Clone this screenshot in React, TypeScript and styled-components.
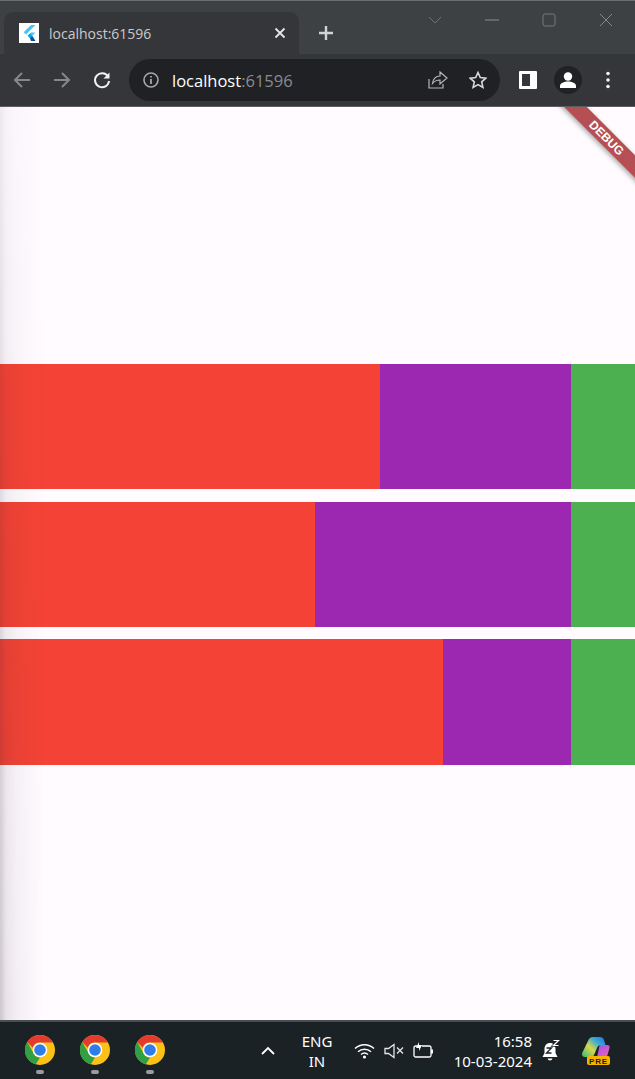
import React from "react";
import styled, { createGlobalStyle } from "styled-components";

const GlobalStyle = createGlobalStyle`
  html, body {
    margin: 0;
    padding: 0;
    height: 100%;
    background: #fffbff;
    font-family: "Noto Sans", "Open Sans", sans-serif;
    overflow: hidden;
  }
  #root {
    height: 100%;
  }
`;

const Window = styled.div`
  display: flex;
  flex-direction: column;
  width: 635px;
  height: 1079px;
`;

const TabStrip = styled.div`
  display: flex;
  align-items: flex-end;
  height: 54px;
  flex: none;
  padding-left: 4px;
  background: #3e4144;
  border-top: 1px solid #6b6d6f;
  box-sizing: border-box;
  position: relative;
`;

const Tab = styled.div`
  display: flex;
  align-items: center;
  width: 295px;
  height: 42px;
  padding: 0 13px 0 15px;
  box-sizing: border-box;
  background: #35363a;
  border-radius: 9px 9px 0 0;
`;

const Favicon = styled.div`
  display: flex;
  align-items: center;
  justify-content: center;
  width: 20px;
  height: 20px;
  background: #ffffff;
  flex: none;
`;

const TabTitle = styled.span`
  flex: 1;
  margin-left: 10px;
  font-family: "Open Sans", sans-serif;
  font-size: 14px;
  color: #c8cacc;
`;

const NewTab = styled.div`
  display: flex;
  align-items: center;
  margin-left: 19px;
  height: 42px;
`;

const WindowControls = styled.div`
  display: flex;
  align-items: center;
  gap: 43px;
  position: absolute;
  top: 12px;
  right: 22px;
`;

const Toolbar = styled.div`
  display: flex;
  align-items: center;
  height: 53px;
  flex: none;
  padding-left: 12px;
  box-sizing: border-box;
  background: #35363a;
  border-bottom: 1px solid #5c5e61;
`;

const NavGroup = styled.div`
  display: flex;
  align-items: center;
  gap: 20px;
  width: 117px;
  flex: none;
`;

const Omnibox = styled.div`
  display: flex;
  align-items: center;
  width: 371px;
  height: 42px;
  padding: 0 13px 0 14px;
  box-sizing: border-box;
  background: #202124;
  border-radius: 21px;
  flex: none;
`;

const Address = styled.span`
  flex: 1;
  margin-left: 13px;
  font-family: "Open Sans", sans-serif;
  font-size: 16.5px;
  color: #ffffff;
  span {
    color: #8a8c8f;
  }
`;

const OmniIcons = styled.div`
  display: flex;
  align-items: center;
  gap: 21px;
`;

const ToolbarEnd = styled.div`
  display: flex;
  align-items: center;
  margin-left: 19px;
`;

const Avatar = styled.div`
  display: flex;
  align-items: center;
  justify-content: center;
  width: 28px;
  height: 28px;
  margin: 0 24px 0 17px;
  border-radius: 50%;
  background: #202124;
`;

const Page = styled.main`
  flex: 1;
  display: flex;
  flex-direction: column;
  justify-content: center;
  gap: 12.5px;
  padding-top: 1.6px;
  background: #fffbff;
  position: relative;
  overflow: hidden;
`;

const BarRow = styled.div`
  display: flex;
  height: 125.2px;
  flex: none;
`;

const Segment = styled.div<{ $color: string; $size: number }>`
  width: ${(p) => p.$size}px;
  flex: none;
  background: ${(p) => p.$color};
`;

/* soft shadow of the neighbouring window, stronger toward the bottom */
const EdgeShade = styled.div`
  position: absolute;
  left: 0;
  top: 0;
  bottom: 0;
  width: 44px;
  background: linear-gradient(
    90deg,
    rgba(40, 30, 40, 0.24) 0,
    rgba(40, 30, 40, 0.11) 6px,
    rgba(40, 30, 40, 0.06) 16px,
    rgba(40, 30, 40, 0) 100%
  );
  mask-image: linear-gradient(180deg, rgba(0, 0, 0, 0.35), rgba(0, 0, 0, 1));
  pointer-events: none;
`;

const DebugBanner = styled.div`
  position: absolute;
  top: 23px;
  right: -28.5px;
  width: 115px;
  height: 16px;
  display: flex;
  align-items: center;
  justify-content: center;
  transform: rotate(45deg);
  background: rgba(176, 64, 68, 0.92);
  box-shadow: 0 2px 5px rgba(0, 0, 0, 0.35);
  color: #ffffff;
  font-family: "Liberation Sans", sans-serif;
  font-size: 12px;
  font-weight: 700;
`;

const Taskbar = styled.footer`
  display: flex;
  align-items: center;
  height: 59px;
  flex: none;
  padding-left: 25px;
  box-sizing: border-box;
  background: #1b2225;
  border-top: 2px solid #4a4d50;
  color: #ffffff;
`;

const Apps = styled.div`
  display: flex;
  gap: 25px;
  width: 236px;
  flex: none;
`;

const AppSlot = styled.div`
  display: flex;
  flex-direction: column;
  align-items: center;
  gap: 5px;
  margin-top: 7px;
`;

const RunningDot = styled.div`
  width: 8px;
  height: 4px;
  border-radius: 2px;
  background: #9a9c9e;
`;

const Lang = styled.div`
  width: 34px;
  margin-left: 25px;
  font-size: 15px;
  line-height: 20px;
  text-align: center;
  flex: none;
`;

const Tray = styled.div`
  display: flex;
  align-items: center;
  gap: 9px;
  margin-left: 20px;
  flex: none;
`;

const Clock = styled.div`
  width: 80px;
  margin-left: 18px;
  font-size: 15px;
  line-height: 20px;
  text-align: right;
  white-space: nowrap;
  flex: none;
`;

const TrayEnd = styled.div`
  display: flex;
  align-items: center;
  gap: 21px;
  margin-left: 10px;
  flex: none;
`;

const rows = [
  [380, 191, 64],
  [315, 256, 64],
  [443, 128, 64],
];
const colors = ["#f44336", "#9c27b0", "#4caf50"];

const FlutterLogo = () => (
  <svg width="16" height="18" viewBox="0 0 16 18">
    <path d="M10 1h4.500L5 10.500 2.700 8.200z" fill="#47c5fb" />
    <path d="M10 8.500h4.500L9 14l-2.300-2.300z" fill="#47c5fb" />
    <path d="M6.700 11.700 9 9.400l2.200 2.300L9 14z" fill="#00a8e8" />
    <path d="M9 14l2.200-2.300 3.300 5.300H10z" fill="#00569e" />
  </svg>
);

const ChromeLogo = () => (
  <svg width="30" height="30" viewBox="0 0 30 30">
    <circle cx="15" cy="15" r="15" fill="#fbc116" />
    <path d="M15 0a15 15 0 0 1 13 7.500H15a7.500 7.500 0 0 0-7.200 5.300L2.200 7A15 15 0 0 1 15 0z" fill="#e33b2e" />
    <path d="M2.200 7l6.500 11.500a7.500 7.500 0 0 0 6.300 4l-4.300 7A15 15 0 0 1 2.200 7z" fill="#319f43" />
    <circle cx="15" cy="15" r="7.300" fill="#ffffff" />
    <circle cx="15" cy="15" r="5.800" fill="#2f7de8" />
  </svg>
);

const Icon = ({ w, h, children }: { w: number; h: number; children: React.ReactNode }) => (
  <svg width={w} height={h} viewBox={`0 0 ${w} ${h}`} fill="none" style={{ flex: "none", display: "block" }}>
    {children}
  </svg>
);

export default function App() {
  return (
    <Window>
      <GlobalStyle />
      <TabStrip>
        <Tab>
          <Favicon>
            <FlutterLogo />
          </Favicon>
          <TabTitle>localhost:61596</TabTitle>
          <Icon w={12} h={12}>
            <path d="M1.500 1.500l9 9M10.500 1.500l-9 9" stroke="#e6e7e8" strokeWidth="1.800" />
          </Icon>
        </Tab>
        <NewTab>
          <Icon w={16} h={16}>
            <path d="M8 1v14M1 8h14" stroke="#d2d3d5" strokeWidth="2.400" />
          </Icon>
        </NewTab>
        <WindowControls>
          <Icon w={14} h={14}>
            <path d="M1 4l6 6 6-6" stroke="#6f7275" strokeWidth="1" />
          </Icon>
          <Icon w={14} h={14}>
            <path d="M0 7h14" stroke="#8b8d90" strokeWidth="1" />
          </Icon>
          <Icon w={14} h={14}>
            <rect x="1" y="1" width="12" height="12" rx="2" stroke="#75787b" strokeWidth="1" />
          </Icon>
          <Icon w={14} h={14}>
            <path d="M1 1l12 12M13 1L1 13" stroke="#85878a" strokeWidth="1" />
          </Icon>
        </WindowControls>
      </TabStrip>
      <Toolbar>
        <NavGroup>
          <Icon w={20} h={20}>
            <path d="M18 10H3M10 3l-7 7 7 7" stroke="#85888b" strokeWidth="2" />
          </Icon>
          <Icon w={20} h={20}>
            <path d="M2 10h15M10 3l7 7-7 7" stroke="#85888b" strokeWidth="2" />
          </Icon>
          <Icon w={20} h={20}>
            <path d="M16 6.500A7 7 0 1 0 17 11" stroke="#f1f2f3" strokeWidth="2" />
            <path d="M17.500 2.500v6h-6z" fill="#f1f2f3" />
          </Icon>
        </NavGroup>
        <Omnibox>
          <Icon w={16} h={16}>
            <circle cx="8" cy="8" r="7" stroke="#a5a7aa" strokeWidth="1.600" />
            <path d="M8 7v5M8 4v1.600" stroke="#a5a7aa" strokeWidth="1.800" />
          </Icon>
          <Address>
            localhost<span>:61596</span>
          </Address>
          <OmniIcons>
            <Icon w={20} h={20}>
              <path d="M1 9v9h14v-4" stroke="#b4b6b8" strokeWidth="1.200" />
              <path d="M12 2l7 6-7 6v-4c-3.500 0-5.500 1-7.500 3.500C5 9 7.500 6.200 12 6z" stroke="#b4b6b8" strokeWidth="1.200" />
            </Icon>
            <Icon w={18} h={18}>
              <path d="M9 1.500l2.300 5.100 5.500.6-4.100 3.700 1.200 5.500L9 13.600l-4.900 2.800 1.200-5.500-4.100-3.700 5.500-.6z" stroke="#d8d9da" strokeWidth="1.600" />
            </Icon>
          </OmniIcons>
        </Omnibox>
        <ToolbarEnd>
          <Icon w={18} h={18}>
            <rect x="0" y="0" width="18" height="18" rx="1" fill="#ffffff" />
            <rect x="3" y="3" width="8" height="12" fill="#35363a" />
          </Icon>
          <Avatar>
            <Icon w={18} h={18}>
              <circle cx="9" cy="5.500" r="4.200" fill="#ffffff" />
              <path d="M1 17v-2c0-3 4-4.500 8-4.500s8 1.500 8 4.500v2z" fill="#ffffff" />
            </Icon>
          </Avatar>
          <Icon w={4} h={18}>
            <circle cx="2" cy="2.500" r="1.800" fill="#f1f2f3" />
            <circle cx="2" cy="9" r="1.800" fill="#f1f2f3" />
            <circle cx="2" cy="15.500" r="1.800" fill="#f1f2f3" />
          </Icon>
        </ToolbarEnd>
      </Toolbar>
      <Page>
        {rows.map((row, i) => (
          <BarRow key={i}>
            {row.map((size, j) => (
              <Segment key={j} $color={colors[j]} $size={size} />
            ))}
          </BarRow>
        ))}
        <EdgeShade />
        <DebugBanner>DEBUG</DebugBanner>
      </Page>
      <Taskbar>
        <Apps>
          {[0, 1, 2].map((i) => (
            <AppSlot key={i}>
              <ChromeLogo />
              <RunningDot />
            </AppSlot>
          ))}
        </Apps>
        <Icon w={14} h={9}>
          <path d="M1 8l6-6 6 6" stroke="#ffffff" strokeWidth="1.800" />
        </Icon>
        <Lang>
          ENG
          <br />
          IN
        </Lang>
        <Tray>
          <Icon w={21} h={16}>
            <path d="M1 5.500c5.500-5 13.500-5 19 0M4 8.700c3.700-3.400 9.300-3.400 13 0M7 11.500c2-1.700 5-1.700 7 0" stroke="#ffffff" strokeWidth="1.500" />
            <circle cx="10.500" cy="14" r="1.600" fill="#ffffff" />
          </Icon>
          <Icon w={20} h={16}>
            <path d="M1 5.500h3.500L10 1.500v13l-5.500-4H1z" stroke="#e6e6e6" strokeWidth="1.300" />
            <path d="M13 4.500l6 6M19 4.500l-6 6" stroke="#e6e6e6" strokeWidth="1.300" />
          </Icon>
          <Icon w={21} h={17}>
            <path d="M5 4H2.500A1.500 1.500 0 0 0 1 5.500v8A1.500 1.500 0 0 0 2.500 15h14a1.500 1.500 0 0 0 1.500-1.500v-8A1.500 1.500 0 0 0 16.500 4H9" stroke="#ffffff" strokeWidth="1.300" />
            <path d="M18 7.500h2v4h-2z" fill="#ffffff" />
            <path d="M6 0L3 6h3v3l3-6H6z" fill="#ffffff" />
          </Icon>
        </Tray>
        <Clock>
          16:58
          <br />
          10-03-2024
        </Clock>
        <TrayEnd>
          <Icon w={18} h={23}>
            <path d="M8 4c-3.500 0-5.500 2.700-5.500 6v4L.5 18h15l-2-4v-4c0-3.300-2-6-5.500-6z" fill="#ffffff" />
            <path d="M5.500 19.500c.6 2.500 4.400 2.500 5 0z" fill="#ffffff" />
            <path d="M4.500 9h5l-5 5h5" stroke="#1b2225" strokeWidth="1.300" />
            <path d="M11.500 1.500h5l-5 5h5" stroke="#1b2225" strokeWidth="2.600" />
            <path d="M11.500 1.500h5l-5 5h5" stroke="#ffffff" strokeWidth="1.200" />
          </Icon>
          <Icon w={30} h={30}>
            <defs>
              <linearGradient id="cpA" x1="0" y1="1" x2="1" y2="0">
                <stop offset="0" stopColor="#2fb87c" />
                <stop offset="0.4" stopColor="#d8d84a" />
                <stop offset="0.7" stopColor="#3aa8d8" />
                <stop offset="1" stopColor="#1f6fe0" />
              </linearGradient>
              <linearGradient id="cpB" x1="0" y1="0" x2="1" y2="1">
                <stop offset="0" stopColor="#8a58e0" />
                <stop offset="0.5" stopColor="#c658d8" />
                <stop offset="1" stopColor="#f06aa8" />
              </linearGradient>
            </defs>
            <path d="M12 1h7c2 0 3.500 1.200 4 3l1.500 5H20c-2 0-3.300 1-4 3l-3 7c-.7 1.500-2 2-3.500 2H4c-2.500 0-3.500-2-2.800-4L7 5c1-2.500 2.500-4 5-4z" fill="url(#cpA)" />
            <path d="M19 9h7c2 0 3 1.300 2.500 3l-2 7c-.5 1.500-1.500 3-3 3H13c2 0 3-1 3.500-3l1.500-7c.3-1.500.5-3 1-3z" fill="url(#cpB)" />
            <rect x="6" y="20" width="23" height="9" rx="2" fill="#f5b400" />
            <text x="17.500" y="27.500" textAnchor="middle" fontFamily="Liberation Sans" fontSize="8" fontWeight="700" letterSpacing="0.8" fill="#1b1b1b">PRE</text>
          </Icon>
        </TrayEnd>
      </Taskbar>
    </Window>
  );
}
